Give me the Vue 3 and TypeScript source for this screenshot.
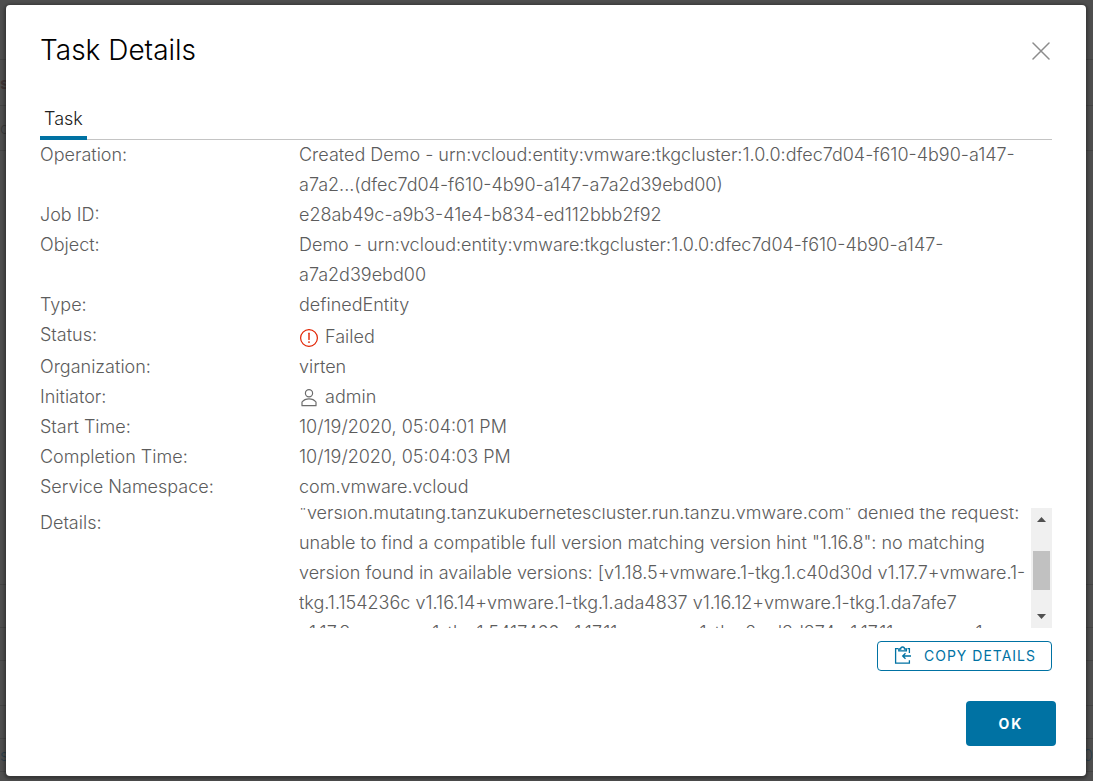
<script setup lang="ts">
import { computed, onMounted, ref } from 'vue'

interface Row {
  label: string
  lines: string[]
  icon?: 'failed' | 'user'
}

const rows: Row[] = [
  {
    label: 'Operation:',
    lines: [
      'Created Demo - urn:vcloud:entity:vmware:tkgcluster:1.0.0:dfec7d04-f610-4b90-a147-',
      'a7a2...(dfec7d04-f610-4b90-a147-a7a2d39ebd00)',
    ],
  },
  { label: 'Job ID:', lines: ['e28ab49c-a9b3-41e4-b834-ed112bbb2f92'] },
  {
    label: 'Object:',
    lines: ['Demo - urn:vcloud:entity:vmware:tkgcluster:1.0.0:dfec7d04-f610-4b90-a147-', 'a7a2d39ebd00'],
  },
  { label: 'Type:', lines: ['definedEntity'] },
  { label: 'Status:', lines: ['Failed'], icon: 'failed' },
  { label: 'Organization:', lines: ['virten'] },
  { label: 'Initiator:', lines: ['admin'], icon: 'user' },
  { label: 'Start Time:', lines: ['10/19/2020, 05:04:01 PM'] },
  { label: 'Completion Time:', lines: ['10/19/2020, 05:04:03 PM'] },
  { label: 'Service Namespace:', lines: ['com.vmware.vcloud'] },
]

const details: string[] = [
  '"version.mutating.tanzukubernetescluster.run.tanzu.vmware.com" denied the request:',
  'unable to find a compatible full version matching version hint "1.16.8": no matching',
  'version found in available versions: [v1.18.5+vmware.1-tkg.1.c40d30d v1.17.7+vmware.1-',
  'tkg.1.154236c v1.16.14+vmware.1-tkg.1.ada4837 v1.16.12+vmware.1-tkg.1.da7afe7',
  'v1.17.8+vmware.1-tkg.1.5417466 v1.17.11+vmware.1-tkg.2.ad3d374 v1.17.11+vmware.1-',
]

interface PageRow {
  height: number
  start?: string
  end?: string
  kind?: string
}

/* Rows of the dimmed page under the dialog; only their ends are visible. */
const pageRows: PageRow[] = [
  { height: 60 },
  { height: 46, start: 's', kind: 'heading' },
  { height: 45, start: 'd' },
  { height: 434 },
  { height: 43 },
  { height: 33 },
  { height: 45 },
  { height: 33 },
  { height: 33, start: 's', end: '0', kind: 'link' },
]

const open = ref(true)
const log = ref<HTMLElement | null>(null)
const scrolled = ref(10)
const thumbTop = computed(() => `${13 + scrolled.value}px`)

function scrollLog(delta: number) {
  if (log.value) log.value.scrollTop += delta
}
function onScroll() {
  if (log.value) scrolled.value = log.value.scrollTop
}
function copyDetails() {
  navigator.clipboard?.writeText(details.join(' '))
}
onMounted(() => {
  if (log.value) log.value.scrollTop = 10
})
</script>

<template>
  <main class="backdrop">
    <div class="page" aria-hidden="true">
      <div v-for="(r, i) in pageRows" :key="i" class="page-row" :class="r.kind" :style="{ height: `${r.height}px` }">
        <span>{{ r.start }}</span><span>{{ r.end }}</span>
      </div>
    </div>
    <section v-if="open" class="modal" role="dialog" aria-modal="true" aria-labelledby="dialog-title">
      <header class="header">
        <h1 id="dialog-title" class="title">Task Details</h1>
        <button class="close" type="button" aria-label="Close" @click="open = false">
          <svg width="18" height="18" viewBox="0 0 18 18" fill="none" stroke="#8c8c8c" stroke-width="1.5" stroke-linecap="round">
            <path d="M1 1 17 17M17 1 1 17" />
          </svg>
        </button>
      </header>

      <div class="tabs" role="tablist">
        <button class="tab" type="button" role="tab" aria-selected="true">Task</button>
      </div>

      <dl class="rows">
        <div v-for="row in rows" :key="row.label" class="row">
          <dt>{{ row.label }}</dt>
          <dd :class="{ status: row.icon === 'failed' }">
            <svg v-if="row.icon === 'failed'" class="icon" width="20" height="20" viewBox="0 0 20 20" fill="none" stroke="#e12200">
              <circle cx="10" cy="10" r="8.4" stroke-width="1.2" />
              <path d="M10 5.2v6.2" stroke-width="1.4" stroke-linecap="round" />
              <circle cx="10" cy="14.1" r="0.9" fill="#e12200" stroke="none" />
            </svg>
            <svg v-else-if="row.icon === 'user'" class="icon" width="20" height="20" viewBox="0 0 20 20" fill="none" stroke="#6c6c6c" stroke-width="1.2">
              <circle cx="10" cy="5.2" r="3.6" />
              <path d="M3 17.7V14c1.6-2.1 4.100-3.200 7-3.200s5.400 1.100 7 3.200v3.700z" stroke-linejoin="round" />
            </svg>
            <span class="value"><span v-for="line in row.lines" :key="line" class="line">{{ line }}</span></span>
          </dd>
        </div>
        <div class="row details">
          <dt>Details:</dt>
          <dd class="logbox">
            <div ref="log" class="log" tabindex="0" @scroll="onScroll">
              <span v-for="line in details" :key="line" class="line">{{ line }}</span>
            </div>
            <div class="scrollbar">
              <button type="button" aria-label="Scroll up" @click="scrollLog(-30)">
                <svg width="9" height="5" viewBox="0 0 9 5"><path d="M0 5 4.500 0 9 5z" fill="#505050" /></svg>
              </button>
              <div class="track"><div class="thumb" :style="{ marginTop: thumbTop }"></div></div>
              <button type="button" aria-label="Scroll down" @click="scrollLog(30)">
                <svg width="9" height="5" viewBox="0 0 9 5"><path d="M0 0H9L4.500 5z" fill="#505050" /></svg>
              </button>
            </div>
          </dd>
        </div>
      </dl>

      <div class="copy-row">
        <button class="copy" type="button" @click="copyDetails">
          <svg width="18" height="18" viewBox="0 0 18 18" fill="none" stroke="#0072a3" stroke-width="1.3">
            <path d="M4 2.600H1.600v14.600h13.800v-3M15.400 7V2.600H13.500M4.800 4.800V3h1.900a1.900 2 0 0 1 3.800 0h1.900v1.800zM17 10H9M11.500 7.200 8.700 10l2.800 2.800" />
          </svg>
          <span>COPY DETAILS</span>
        </button>
      </div>

      <footer class="footer">
        <button class="ok" type="button" @click="open = false">OK</button>
      </footer>
    </section>
  </main>
</template>

<style>
body {
  margin: 0;
  background: #4e4e4e;
}
</style>

<style scoped>
.backdrop {
  position: relative;
  box-sizing: border-box;
  min-height: 100vh;
  padding: 5px 7px 5px 6px;
  background: #4e4e4e;
  font-family: Inter, 'Open Sans', sans-serif;
  font-size: 18px;
  font-weight: 300;
  line-height: 30px;
  color: #5c5c5c;
}
.page {
  position: absolute;
  inset: 0;
  overflow: hidden;
  font-size: 16px;
  color: #3a3a3a;
}
.page-row {
  display: flex;
  align-items: center;
  justify-content: space-between;
  box-sizing: border-box;
  border-bottom: 1px solid #444;
}
.heading {
  font-weight: 700;
  color: #3e3434;
}
.link {
  color: #2c3e4a;
}
button {
  font-family: inherit;
  cursor: pointer;
}
.modal {
  position: relative;
  box-sizing: border-box;
  padding: 30px 34px;
  border-radius: 4px;
  background: #fff;
  box-shadow: 0 1px 3px 2px rgba(0, 0, 0, 0.3);
}
.header {
  display: flex;
  justify-content: space-between;
  align-items: flex-start;
}
.title {
  margin: 0;
  font-size: 28px;
  font-weight: 300;
  line-height: 30px;
  color: #000;
}
.close {
  display: flex;
  margin: 7px 2px 0 0;
  padding: 0;
  border: 0;
  background: none;
}
.tabs {
  display: flex;
  margin-top: 33px;
  box-shadow: inset 0 -1px 0 #c4c4c4;
}
.tab {
  box-sizing: border-box;
  height: 42px;
  padding: 4px 4px 0;
  border: 0;
  border-bottom: 4px solid #0072a3;
  background: none;
  font-size: 18px;
  font-weight: 300;
  line-height: 30px;
  color: #212121;
}
.rows {
  margin: 0;
}
.row {
  display: grid;
  grid-template-columns: 259px minmax(0, 1fr);
}
dt {
  white-space: nowrap;
}
dd {
  display: flex;
  margin: 0;
}
.status {
  padding-top: 2px;
}
.icon {
  flex: none;
  margin: 6px 6px 0 0;
}
.line {
  display: block;
  white-space: nowrap;
}
.details {
  margin-top: 6px;
}
.logbox {
  height: 120px;
}
.log {
  flex: 1;
  min-width: 0;
  overflow-x: hidden;
  overflow-y: auto;
  scrollbar-width: none;
}
.scrollbar {
  display: flex;
  flex-direction: column;
  flex: none;
  width: 21px;
  background: #f0f0f0;
}
.scrollbar button {
  display: flex;
  align-items: center;
  justify-content: center;
  height: 20px;
  padding: 2px 0 0;
  border: 0;
  background: none;
}
.scrollbar button:last-child {
  padding: 0 0 4px;
}
.track {
  flex: 1;
  display: flex;
  padding: 0 2px;
}
.thumb {
  width: 100%;
  height: 39px;
  background: #c1c1c1;
}
.copy-row,
.footer {
  display: flex;
  justify-content: flex-end;
}
.copy {
  display: flex;
  align-items: center;
  gap: 12px;
  box-sizing: border-box;
  height: 30px;
  margin-top: 13px;
  padding: 0 15px 2px 16px;
  border: 1px solid #0072a3;
  border-radius: 4px;
  background: #fff;
  font-size: 14px;
  letter-spacing: 1px;
  color: #0072a3;
}
.footer {
  margin: 30px -4px 0 0;
}
.ok {
  width: 90px;
  height: 45px;
  border: 0;
  border-radius: 4px;
  background: #0072a3;
  font-size: 14px;
  font-weight: 700;
  letter-spacing: 2px;
  color: #fff;
}
</style>
